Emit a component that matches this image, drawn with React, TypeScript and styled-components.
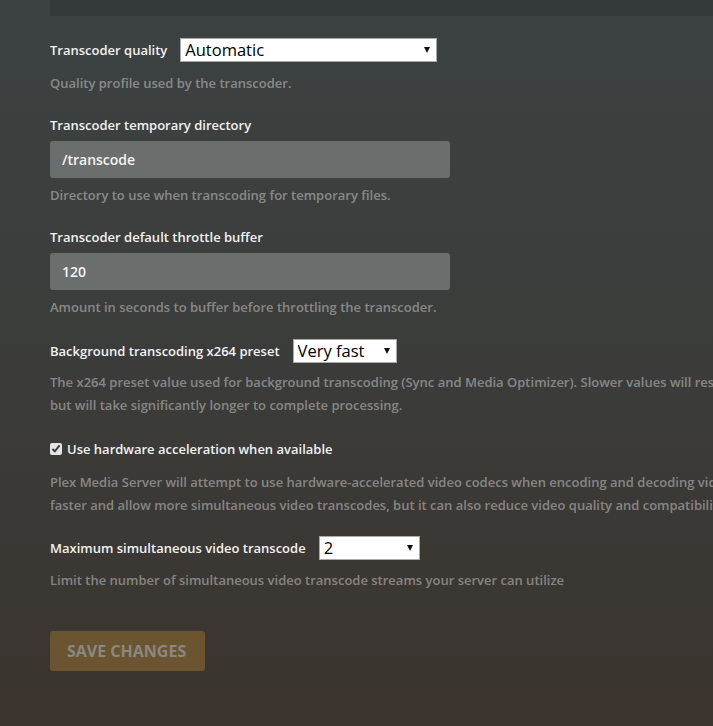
import React from "react";
import styled, { createGlobalStyle } from "styled-components";

const GlobalStyle = createGlobalStyle`
    html, body {
        margin: 0;
        padding: 0;
        height: 100%;
        overflow: hidden;
    }
    body {
        font-family: "Open Sans", "Liberation Sans", sans-serif;
        background: #3b3a37;
    }
`

const Page = styled.div`
    min-height: 100vh;
    box-sizing: border-box;
    padding-left: 50px;
    background: linear-gradient(180deg, #3c4242 0%, #3b3d3b 45%, #3b342f 100%);
`

const TopPanel = styled.div`
    height: 16px;
    background: #343a3a;
    margin-bottom: 22px;
`

const Section = styled.div<{ $gap?: number }>`
    margin-bottom: ${p => p.$gap ?? 20}px;
`

const Row = styled.div`
    display: flex;
    align-items: center;
    height: 24px;
`

const Label = styled.label`
    display: block;
    color: #f1f1f1;
    font-size: 13px;
    font-weight: 600;
    line-height: 18px;
    white-space: nowrap;
`

const InlineLabel = styled(Label)`
    margin-right: 13px;
`

const SelectWrap = styled.div<{ $width: number }>`
    position: relative;
    width: ${p => p.$width}px;
    height: 24px;
    &:after {
        content: "";
        position: absolute;
        right: 7px;
        top: 9px;
        border-left: 3px solid transparent;
        border-right: 3px solid transparent;
        border-top: 6px solid #111;
        pointer-events: none;
    }
`

const Select = styled.select`
    appearance: none;
    width: 100%;
    height: 100%;
    box-sizing: border-box;
    margin: 0;
    padding: 0 0 0 4px;
    border: 1px solid #a9a9a9;
    border-radius: 0;
    background: #fff;
    color: #000;
    font-family: "Open Sans", "Liberation Sans", sans-serif;
    font-size: 16.5px;
    line-height: 22px;
    outline: none;
`

const TextInput = styled.input`
    display: block;
    width: 400px;
    height: 37px;
    box-sizing: border-box;
    margin: 7px 0 0;
    padding: 0 12px;
    border: none;
    border-radius: 3px;
    background: #6a6f6e;
    color: #f3f3f3;
    font-family: "Open Sans", "Liberation Sans", sans-serif;
    font-size: 14px;
    font-weight: 600;
    outline: none;
`

const Help = styled.div<{ $mt: number }>`
    margin-top: ${p => p.$mt}px;
    color: rgba(255, 255, 255, 0.4);
    font-size: 13px;
    font-weight: 600;
    line-height: 23px;
    white-space: nowrap;
`

const CheckRow = styled.label`
    display: flex;
    align-items: center;
    height: 24px;
    color: #f1f1f1;
    font-size: 13px;
    font-weight: 600;
    white-space: nowrap;
`

const Check = styled.input`
    width: 12px;
    height: 12px;
    margin: 0 5px 0 0;
    accent-color: #e4e4e4;
`

const SaveButton = styled.button`
    height: 40px;
    padding: 0 19px 0 17px;
    border: none;
    border-radius: 3px;
    background: #6b5430;
    color: #8a8883;
    font-family: "Open Sans", "Liberation Sans", sans-serif;
    font-size: 16px;
    font-weight: 700;
    text-transform: uppercase;
`

export default function App() {
    return (
        <>
            <GlobalStyle />
            <Page>
                <TopPanel />

                <Section $gap={21}>
                    <Row>
                        <InlineLabel>Transcoder quality</InlineLabel>
                        <SelectWrap $width={257}>
                            <Select defaultValue="auto">
                                <option value="auto">Automatic</option>
                            </Select>
                        </SelectWrap>
                    </Row>
                    <Help $mt={10}>Quality profile used by the transcoder.</Help>
                </Section>

                <Section $gap={21}>
                    <Label>Transcoder temporary directory</Label>
                    <TextInput defaultValue="/transcode" />
                    <Help $mt={6}>Directory to use when transcoding for temporary files.</Help>
                </Section>

                <Section>
                    <Label>Transcoder default throttle buffer</Label>
                    <TextInput defaultValue="120" />
                    <Help $mt={6}>Amount in seconds to buffer before throttling the transcoder.</Help>
                </Section>

                <Section>
                    <Row>
                        <InlineLabel>Background transcoding x264 preset</InlineLabel>
                        <SelectWrap $width={104}>
                            <Select defaultValue="veryfast">
                                <option value="veryfast">Very fast</option>
                            </Select>
                        </SelectWrap>
                    </Row>
                    <Help $mt={8}>
                        The x264 preset value used for background transcoding (Sync and Media Optimizer). Slower values will result in better video quality and smaller file sizes,
                        <br />
                        but will take significantly longer to complete processing.
                    </Help>
                </Section>

                <Section $gap={19}>
                    <CheckRow>
                        <Check type="checkbox" defaultChecked />
                        Use hardware acceleration when available
                    </CheckRow>
                    <Help $mt={10}>
                        Plex Media Server will attempt to use hardware-accelerated video codecs when encoding and decoding video. Hardware acceleration can make transcodes
                        <br />
                        faster and allow more simultaneous video transcodes, but it can also reduce video quality and compatibility.
                    </Help>
                </Section>

                <Section $gap={39}>
                    <Row>
                        <InlineLabel>Maximum simultaneous video transcode</InlineLabel>
                        <SelectWrap $width={101}>
                            <Select defaultValue="2">
                                <option value="2">2</option>
                            </Select>
                        </SelectWrap>
                    </Row>
                    <Help $mt={9}>Limit the number of simultaneous video transcode streams your server can utilize</Help>
                </Section>

                <SaveButton>Save Changes</SaveButton>
            </Page>
        </>
    );
}
